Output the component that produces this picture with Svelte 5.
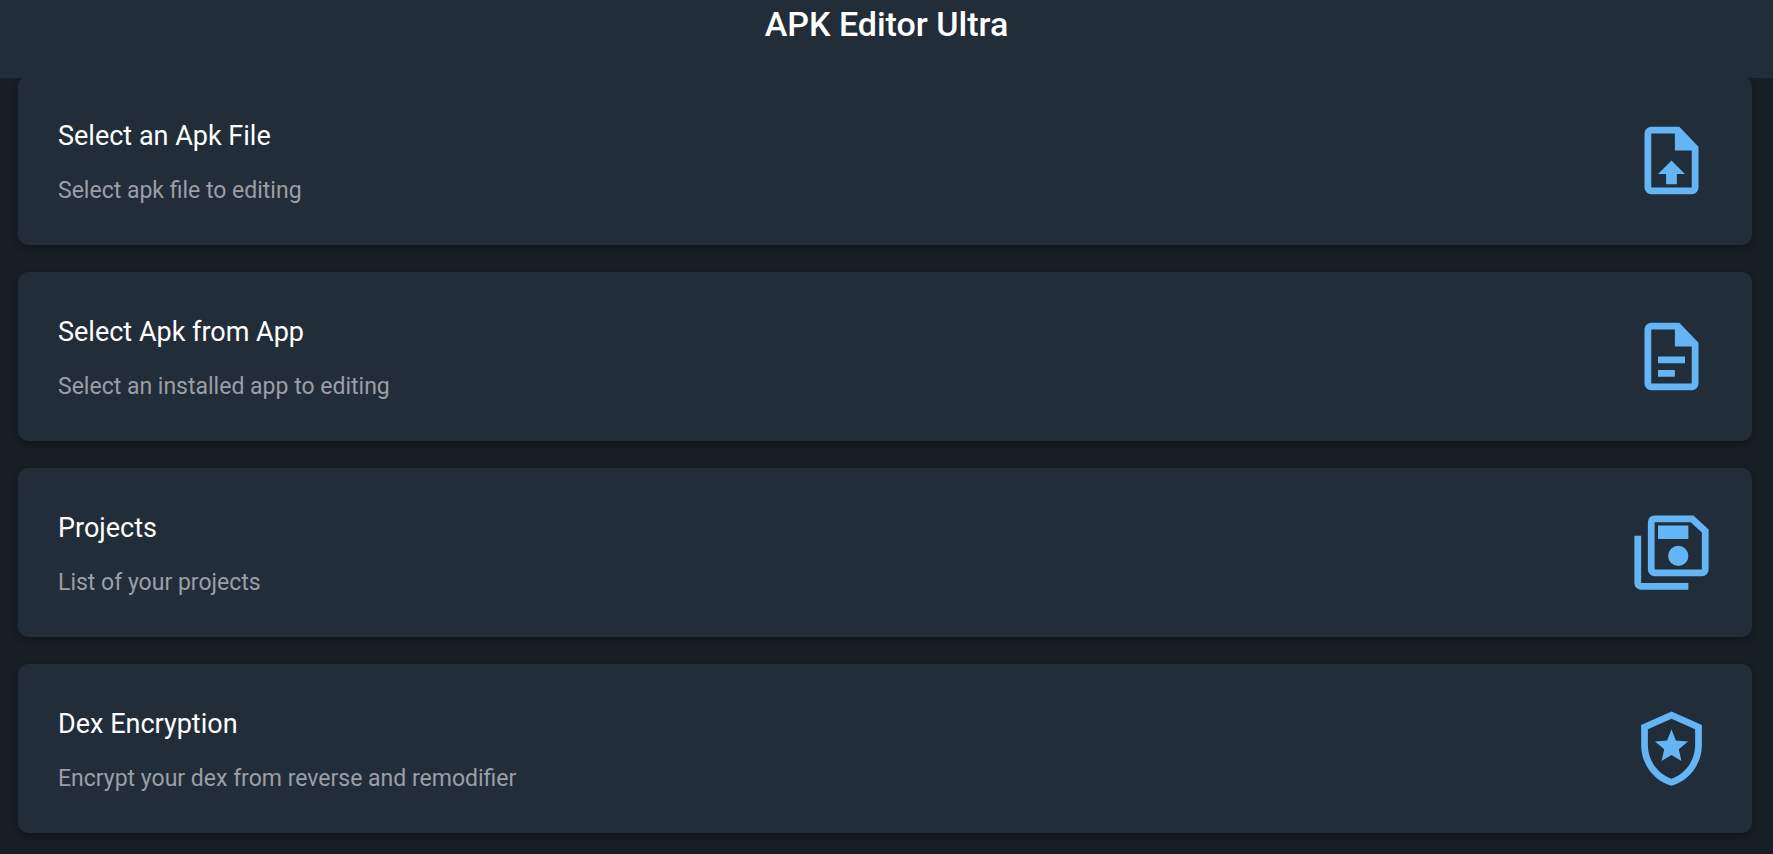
<script lang="ts">
  type Action = { title: string; description: string; icon: string }

  const actions: Action[] = [
    { title: "Select an Apk File", description: "Select apk file to editing", icon: "upload" },
    { title: "Select Apk from App", description: "Select an installed app to editing", icon: "document" },
    { title: "Projects", description: "List of your projects", icon: "projects" },
    { title: "Dex Encryption", description: "Encrypt your dex from reverse and remodifier", icon: "shield" },
  ]
</script>

<header class="toolbar">
  <h1>APK Editor Ultra</h1>
</header>

<main class="list">
  {#each actions as action}
    <button type="button" class="card">
      <span class="copy">
        <span class="title">{action.title}</span>
        <span class="description">{action.description}</span>
      </span>
      <svg class="icon" viewBox="0 0 24 24" aria-hidden="true">
        {#if action.icon === "upload" || action.icon === "document"}
          <path
            fill-rule="evenodd"
            d="M6 2h8.3L20 7.9V20a2 2 0 0 1-2 2H6a2 2 0 0 1-2-2V4a2 2 0 0 1 2-2zm0 2v16h12V9h-5V4z"
          />
          {#if action.icon === "upload"}
            <path d="M12 12l4 4h-2.4v3h-3.2v-3H8z" />
          {:else}
            <path d="M8 12h8v2H8zM8 16h5v2H8z" />
          {/if}
        {:else if action.icon === "projects"}
          <path d="M1 7h2v14h14v2H3a2 2 0 0 1-2-2z" />
          <path
            fill-rule="evenodd"
            d="M7 1h11.5L23 5.2V17a2 2 0 0 1-2 2H7a2 2 0 0 1-2-2V3a2 2 0 0 1 2-2zm0 2v14h14V6.1L17.7 3z"
          />
          <path d="M8 4h9v4H8z" />
          <circle cx="14" cy="13" r="3" />
        {:else}
          <path
            fill-rule="evenodd"
            d="M12 1l9 4v6c0 5.55-3.84 10.74-9 12-5.16-1.26-9-6.45-9-12V5zm0 2.18L5 6.3V11c0 4.52 2.98 8.69 7 9.93 4.02-1.24 7-5.41 7-9.93V6.3z"
          />
          <path
            d="M12 6.4L13.3 9.6 16.9 9.9 14.15 12.25 14.95 15.7 12 13.9 9.05 15.7 9.85 12.25 7.1 9.9 10.7 9.6z"
          />
        {/if}
      </svg>
    </button>
  {/each}
</main>

<style>
  :global(body) {
    background: #161e26;
    font-family: Roboto, "Liberation Sans", sans-serif;
  }

  .toolbar {
    position: relative;
    z-index: 1;
    box-sizing: border-box;
    height: 78px;
    padding-top: 4px;
    background: #222d3a;
  }

  h1 {
    margin: 0;
    color: #fff;
    font-size: 34px;
    font-weight: 500;
    line-height: 40px;
    text-align: center;
  }

  /* the first card sits just under the toolbar edge */
  .list {
    display: flex;
    flex-direction: column;
    gap: 27px;
    margin-top: -2px;
    padding: 0 21px 21px 18px;
  }

  .card {
    display: flex;
    align-items: center;
    justify-content: space-between;
    padding: 40px;
    border: none;
    border-radius: 10px;
    background: #222d3a;
    box-shadow: 0 3px 6px rgba(0, 0, 0, 0.3);
    font-family: inherit;
    text-align: left;
    cursor: pointer;
  }

  .copy {
    display: flex;
    flex-direction: column;
    gap: 21px;
  }

  .title {
    color: #fff;
    font-size: 27px;
    line-height: 40px;
  }

  .description {
    color: #9a9fa5;
    font-size: 23px;
    line-height: 28px;
  }

  .icon {
    width: 81px;
    height: 81px;
    flex-shrink: 0;
    fill: #64b5f6;
  }
</style>
